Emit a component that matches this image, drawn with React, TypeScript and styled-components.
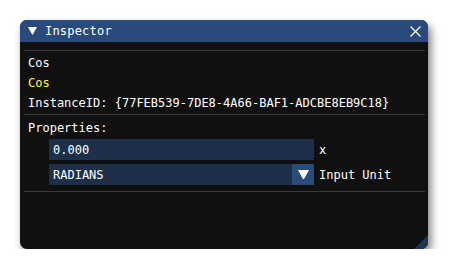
import React from "react";
import styled, { createGlobalStyle } from "styled-components";

const Global = createGlobalStyle`
  html, body { margin: 0; padding: 0; background: #ffffff; }
  body { font-family: "DejaVu Sans Mono", "Liberation Mono", monospace; }
`;

const Page = styled.div`
  padding: 20px 0 0 20px;
`;

const Window = styled.div`
  position: relative;
  width: 408px;
  height: 229px;
  background: #101010;
  border-radius: 7px;
  overflow: hidden;
  box-shadow: 3px 5px 8px rgba(0, 0, 0, 0.5);
  display: flex;
  flex-direction: column;
  color: #ffffff;
  font-size: 12px;
`;

const TitleBar = styled.div`
  height: 22px;
  flex: none;
  background: #294a7a;
  display: flex;
  align-items: center;
  padding: 0 0 0 8px;
`;

const TitleText = styled.span`
  margin-left: 8px;
  flex: 1;
  letter-spacing: 0.2px;
`;

const CloseBtn = styled.div`
  width: 22px;
  height: 22px;
  display: flex;
  align-items: center;
  justify-content: center;
  margin-right: 2px;
`;

const Body = styled.div`
  padding: 8px 3px 0 4px;
  display: flex;
  flex-direction: column;
`;

const Separator = styled.div<{ $top?: number; $bottom?: number }>`
  height: 1px;
  background: #3a3a40;
  margin-top: ${(p) => p.$top ?? 0}px;
  margin-bottom: ${(p) => p.$bottom ?? 0}px;
`;

const Row = styled.div<{ $color?: string }>`
  height: 20px;
  line-height: 20px;
  padding-left: 4px;
  color: ${(p) => p.$color ?? "#ffffff"};
  white-space: nowrap;
`;

const FieldRow = styled.div<{ $gap?: number; $top?: number }>`
  display: flex;
  align-items: center;
  padding-left: 25px;
  margin-top: ${(p) => p.$top ?? 0}px;
  margin-bottom: ${(p) => p.$gap ?? 0}px;
`;

const Field = styled.div`
  width: 265px;
  height: 21px;
  background: #1d2f49;
  display: flex;
  align-items: center;
  padding-left: 4px;
  box-sizing: border-box;
`;

const Combo = styled.div`
  width: 265px;
  height: 21px;
  background: #1d2f49;
  display: flex;
  align-items: center;
  box-sizing: border-box;
`;

const ComboValue = styled.span`
  flex: 1;
  padding-left: 4px;
`;

const ArrowBox = styled.div`
  width: 22px;
  height: 21px;
  background: #2b4b79;
  display: flex;
  align-items: center;
  justify-content: center;
`;

const FieldLabel = styled.span`
  margin-left: 5px;
`;

const Grip = styled.svg`
  position: absolute;
  right: 0;
  bottom: 0;
`;

const Triangle = ({ size = 9 }: { size?: number }) => (
  <svg width={size} height={size * 0.9} viewBox="0 0 10 9">
    <polygon points="0,0 10,0 5,9" fill="#ffffff" />
  </svg>
);

export default function App() {
  return (
    <>
      <Global />
      <Page>
        <Window>
          <TitleBar>
            <Triangle />
            <TitleText>Inspector</TitleText>
            <CloseBtn>
              <svg width="11" height="11" viewBox="0 0 11 11">
                <path d="M0.5 0.5 L10.5 10.5 M10.5 0.5 L0.5 10.5" stroke="#ffffff" strokeWidth="1.2" />
              </svg>
            </CloseBtn>
          </TitleBar>
          <Body>
            <Separator $bottom={2} />
            <Row>Cos</Row>
            <Row $color="#ffff33">Cos</Row>
            <Row>InstanceID: {"{77FEB539-7DE8-4A66-BAF1-ADCBE8EB9C18}"}</Row>
            <Separator $top={1} $bottom={3} />
            <Row>Properties:</Row>
            <FieldRow $gap={4} $top={1}>
              <Field>0.000</Field>
              <FieldLabel>x</FieldLabel>
            </FieldRow>
            <FieldRow>
              <Combo>
                <ComboValue>RADIANS</ComboValue>
                <ArrowBox>
                  <Triangle size={11} />
                </ArrowBox>
              </Combo>
              <FieldLabel>Input Unit</FieldLabel>
            </FieldRow>
            <Separator $top={6} />
          </Body>
          <Grip width="14" height="14" viewBox="0 0 14 14">
            <polygon points="14,0 14,14 0,14" fill="#1e3558" />
          </Grip>
        </Window>
      </Page>
    </>
  );
}
